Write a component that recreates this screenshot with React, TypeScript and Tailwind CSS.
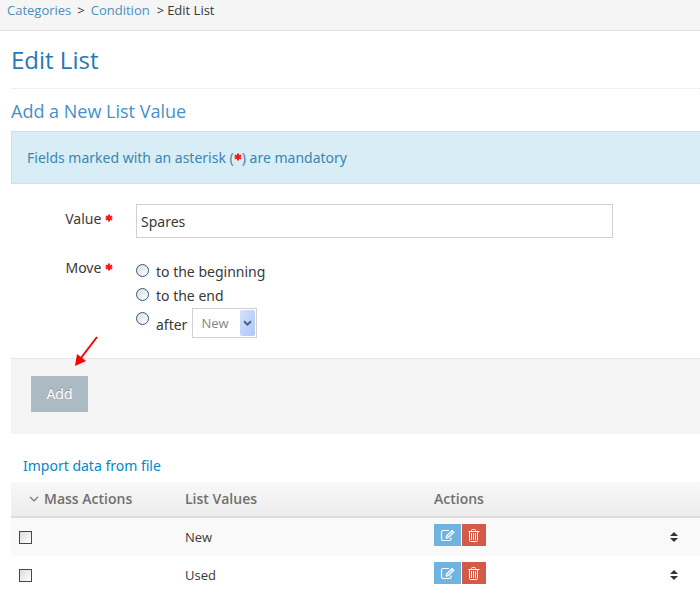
import React, { useState } from "react";

const values = ["New", "Used"];

function Asterisk() {
  return (
    <svg viewBox="0 0 8 8" className="mb-[2px] inline-block h-2 w-2 align-baseline" aria-label="required">
      <path d="M4 0.4V7.6M0.8 2.3L7.2 5.7M7.2 2.3L0.8 5.7" stroke="#fa1616" strokeWidth="2" />
    </svg>
  );
}

function EditIcon() {
  return (
    <svg viewBox="0 0 15 13" className="h-[13px] w-[15px]" fill="none" stroke="#fff" aria-hidden="true">
      <path d="M9 1.5H3Q1.5 1.5 1.5 3V10Q1.5 11.5 3 11.5H9.5Q11 11.5 11 10V8.5" strokeWidth="1.2" />
      <path d="M6 9.2L6.4 6.6L12 1.2L14.2 3.2L8.6 8.8Z" fill="#fff" fillOpacity="0.75" strokeWidth="1" />
      <path d="M7.6 7.6L11.2 4" stroke="#6fb3e0" strokeWidth="0.8" />
    </svg>
  );
}

function TrashIcon() {
  return (
    <svg viewBox="0 0 12 13" className="h-[13px] w-3" fill="none" stroke="#fff" aria-hidden="true">
      <path d="M0.5 2.5H11.5M3.5 2.5V1.5Q3.5 0.5 4.5 0.5H6.5Q7.5 0.5 7.5 1.5V2.5M1.5 2.5V11.5Q1.5 12.5 2.5 12.5H8.5Q9.5 12.5 9.5 11.5V2.5M3.5 4V11M5.5 4V11M7.5 4V11" />
    </svg>
  );
}

function SortIcon() {
  return (
    <svg viewBox="0 0 8 10" className="h-[10px] w-2" fill="#333" aria-hidden="true">
      <path d="M4 0L8 4H0ZM0 6H8L4 10Z" />
    </svg>
  );
}

const radioClass =
  "mt-1 h-[13px] w-[13px] shrink-0 appearance-none rounded-full border border-[#2b5a88] bg-gradient-to-br from-[#dcdcd7] to-white checked:border-4";

export default function App() {
  const [value, setValue] = useState("Spares");
  return (
    <div className="min-h-screen overflow-hidden bg-white font-['Noto_Sans','Open_Sans',sans-serif] text-[#393939]">
      <nav className="flex h-[31px] items-start border-b border-[#e5e5e5] bg-[#f5f5f5] pl-[7px] font-['Open_Sans',sans-serif] text-[13px] leading-[21px]">
        <a href="#categories" className="text-[#4c8fbd]">Categories</a>
        <span className="px-[6px]">&gt;</span>
        <a href="#condition" className="text-[#4c8fbd]">Condition</a>
        <span className="pr-[3px] pl-[7px]">&gt;</span>
        <span>Edit List</span>
      </nav>

      <main className="pl-[11px]">
        <h1 className="h-[58px] border-b border-dotted border-[#e2e2e2] pt-[11px] font-['Open_Sans',sans-serif] text-2xl leading-9 text-[#2679b5]">Edit List</h1>
        <h2 className="pt-2 pb-[6px] font-['Open_Sans',sans-serif] text-lg leading-7 text-[#478fca]">Add a New List Value</h2>

        <p className="border border-r-0 border-[#bce8f1] bg-[#d9edf7] px-[15px] py-[14px] text-sm leading-[23px] text-[#3a87ad]">
          Fields marked with an asterisk (<Asterisk />) are mandatory
        </p>

        <form onSubmit={(e) => e.preventDefault()}>
          <div className="grid grid-cols-[102px_1fr] gap-x-[23px] pt-5 pb-5 text-sm">
            <label htmlFor="value" className="pt-1 text-right leading-[22px]">
              Value <Asterisk />
            </label>
            <input
              id="value"
              value={value}
              onChange={(e) => setValue(e.target.value)}
              className="h-[34px] w-full max-w-[477px] border border-[#d0d0d0] bg-white px-1 outline-none"
            />
            <span id="move" className="mt-[18px] text-right leading-6">
              Move <Asterisk />
            </span>
            <div role="radiogroup" aria-labelledby="move" className="mt-[22px] leading-6">
              <label className="flex h-6 gap-[7px]">
                <input type="radio" name="move" className={radioClass} />
                to the beginning
              </label>
              <label className="flex h-6 gap-[7px]">
                <input type="radio" name="move" className={radioClass} />
                to the end
              </label>
              <div className="flex h-[30px] items-start">
                <label className="flex gap-[7px]">
                  <input type="radio" name="move" className={radioClass} />
                  <span className="pt-[5px]">after</span>
                </label>
                <div className="relative ml-[5px]">
                  <select aria-label="Position" className="block h-[30px] w-[65px] appearance-none border border-[#d0d0d0] bg-white pl-2 font-['Open_Sans',sans-serif] text-[13px] text-[#858585]">
                    {values.map((v) => (
                      <option key={v}>{v}</option>
                    ))}
                  </select>
                  <span className="pointer-events-none absolute top-[2px] right-[2px] flex h-[26px] w-[15px] items-center justify-center rounded-[2px] bg-gradient-to-br from-[#d3e1fd] to-[#aec8f7]">
                    <svg viewBox="0 0 9 7" className="h-[7px] w-[9px]" fill="none" aria-hidden="true">
                      <path d="M1 1.2L4.5 4.7L8 1.2" stroke="#4d6185" strokeWidth="2" />
                    </svg>
                  </span>
                </div>
              </div>
            </div>
          </div>

          <div className="relative h-[76px] border-t border-[#e5e5e5] bg-[#f5f5f5] pt-[17px] pl-5">
            <button className="h-9 w-[57px] bg-[#abbac3] text-sm text-white [text-shadow:0_-1px_0_rgba(0,0,0,0.25)]">Add</button>
            <svg viewBox="0 0 26 32" className="pointer-events-none absolute -top-[24px] left-[62px] h-8 w-[26px]" aria-hidden="true">
              <path d="M24 2L8 23" stroke="#f00" strokeWidth="2" />
              <path d="M2 31L4 19L13 26Z" fill="#f00" />
            </svg>
          </div>
        </form>

        <a href="#import" className="ml-3 block pt-[21px] pb-[5px] text-sm leading-[22px] text-[#0088cc]">Import data from file</a>

        <table className="w-full table-fixed border-separate border-spacing-0 text-left font-['Open_Sans',sans-serif] text-[13px]">
          <colgroup>
            <col className="w-[166px]" />
            <col className="w-[249px]" />
            <col />
            <col className="w-[54px]" />
          </colgroup>
          <thead className="text-sm text-[#707070]">
            <tr className="h-9 bg-gradient-to-b from-[#f8f8f8] to-[#ececec]">
              <th className="border-b-2 border-[#ddd] p-0 pl-[18px]">
                <button className="flex items-center gap-[5px] font-semibold">
                  <svg viewBox="0 0 10 6" className="h-[6px] w-[10px]" fill="none" aria-hidden="true">
                    <path d="M1 0.8L5 4.8L9 0.8" stroke="#707070" strokeWidth="1.2" />
                  </svg>
                  Mass Actions
                </button>
              </th>
              <th className="border-b-2 border-[#ddd] p-0 pl-2 font-semibold">List Values</th>
              <th className="border-b-2 border-[#ddd] p-0 pl-2 font-semibold">Actions</th>
              <th aria-label="Order" className="border-b-2 border-[#ddd] p-0" />
            </tr>
          </thead>
          <tbody>
            {values.map((v) => (
              <tr key={v} className="h-[38px] odd:bg-[#f9f9f9]">
                <td className="p-0 pl-2">
                  <input
                    type="checkbox"
                    aria-label={"Select " + v}
                    className="block h-[13px] w-[13px] appearance-none border border-[#1c5180] bg-gradient-to-br from-[#dcdcd7] to-white checked:bg-[#1c5180]"
                  />
                </td>
                <td className="p-0 pt-[2px] pl-2">{v}</td>
                <td className="p-0 pb-1 pl-2">
                  <div className="flex gap-px">
                    <button aria-label={"Edit " + v} className="flex h-[22px] w-[27px] items-center justify-center bg-[#6fb3e0]">
                      <EditIcon />
                    </button>
                    <button aria-label={"Delete " + v} className="flex h-[22px] w-6 items-center justify-center bg-[#d15b47]">
                      <TrashIcon />
                    </button>
                  </div>
                </td>
                <td className="p-0 pl-6">
                  <SortIcon />
                </td>
              </tr>
            ))}
          </tbody>
        </table>
      </main>
    </div>
  );
}
